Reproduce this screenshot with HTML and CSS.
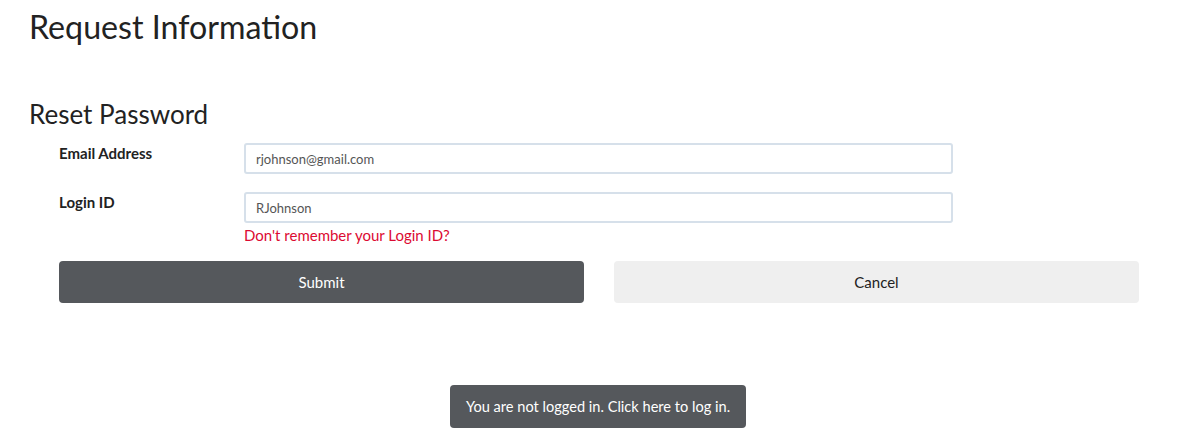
FILE: index.html
```html
<!DOCTYPE html>
<html>
<head>
<meta charset="utf-8">
<link rel="stylesheet" href="styles.css">
</head>
<body>
<div class="page">
  <h1 class="title">Request Information</h1>
  <h2 class="subtitle">Reset Password</h2>
  <form class="form">
    <div class="row">
      <label class="label">Email Address</label>
      <div class="field">
        <input class="input" type="text" value="rjohnson@gmail.com">
      </div>
    </div>
    <div class="row row-last">
      <label class="label">Login ID</label>
      <div class="field">
        <input class="input" type="text" value="RJohnson">
        <a class="forgot" href="#">Don't remember your Login ID?</a>
      </div>
    </div>
    <div class="buttons">
      <button type="button" class="btn btn-dark">Submit</button>
      <button type="button" class="btn btn-light">Cancel</button>
    </div>
  </form>
  <div class="footer">
    <button type="button" class="login">You are not logged in. Click here to log in.</button>
  </div>
</div>
</body>
</html>
```

FILE: styles.css
```css
* { box-sizing: border-box; }
html, body { margin: 0; padding: 0; background: #fff; }
body { font-family: Lato, "Open Sans", sans-serif; color: #222; }
.page { padding: 0 0 0 29px; }
.title { margin: 0; padding-top: 7px; font-weight: 400; font-size: 32.2px; line-height: 40px; color: #222; }
.subtitle { margin: 50px 0 0 0; font-weight: 400; font-size: 26px; line-height: 34px; color: #222; }
.form { margin-left: 30px; width: 1080px; padding-top: 12px; }
.row { display: flex; margin-bottom: 18px; }
.row-last { margin-bottom: 0; }
.label { width: 185px; flex: none; font-weight: 700; font-size: 15px; line-height: 20px; color: #222; }
.field { display: flex; flex-direction: column; }
.input { width: 709px; height: 31px; border: 2px solid #d6e0ea; border-radius: 3px; padding: 0 10px; font-family: Lato, sans-serif; font-size: 13px; color: #555; background: #fff; outline: none; }
.forgot { color: #dc0a32; text-decoration: none; font-size: 15px; line-height: 20px; margin-top: 2px; }
.buttons { display: flex; gap: 30px; margin-top: 16px; }
.btn { flex: 1; height: 42px; border: none; border-radius: 4px; font-family: Lato, sans-serif; font-size: 15px; cursor: pointer; }
.btn-dark { background: #55585c; color: #fff; }
.btn-light { background: #efefef; color: #222; }
.footer { margin-top: 82px; padding-left: 421px; }
.login { width: 296px; height: 43px; border: none; border-radius: 4px; background: #55585c; color: #fff; font-family: Lato, sans-serif; font-size: 14.6px; }
```
